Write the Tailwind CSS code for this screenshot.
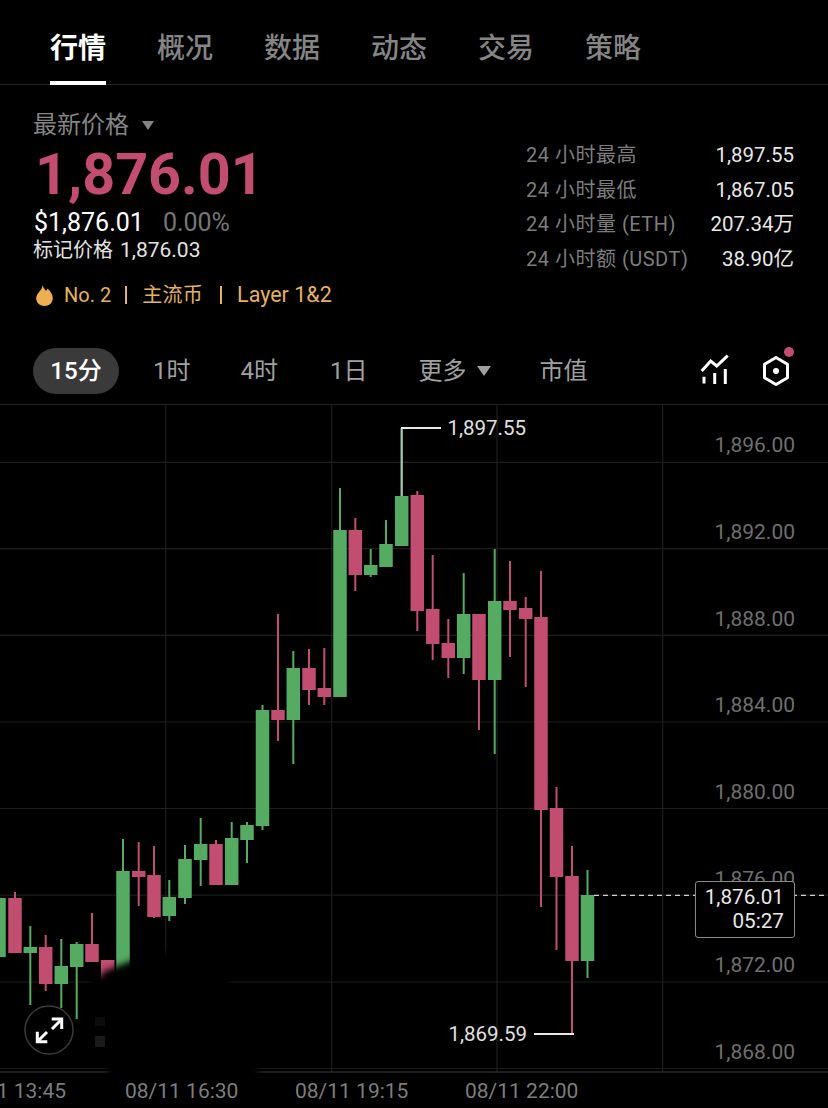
<!DOCTYPE html>
<html lang="zh-CN">
<head>
  <meta charset="UTF-8">
  <title>ETH 行情</title>
  <script src="https://cdn.jsdelivr.net/npm/@tailwindcss/browser@4"></script>
</head>
<body class="bg-black w-[828px] h-[1108px] overflow-hidden font-['Roboto','Noto_Sans_CJK_SC',sans-serif]">

  <!-- Tabs -->
  <nav class="h-[85px] border-b border-[#222] flex gap-[51px] pl-[50px] text-[28px] font-medium text-[#858585]">
    <a class="h-[85px] pt-[29px] leading-[40px] border-b-4 border-white text-white font-bold">行情</a>
    <a class="pt-[29px] leading-[40px]">概况</a>
    <a class="pt-[29px] leading-[40px]">数据</a>
    <a class="pt-[29px] leading-[40px]">动态</a>
    <a class="pt-[29px] leading-[40px]">交易</a>
    <a class="pt-[29px] leading-[40px]">策略</a>
  </nav>

  <!-- Price summary -->
  <section class="h-[263px] flex justify-between pl-[33px] pr-[34px]">
    <div>
      <div class="mt-[24px] h-[32px] flex items-center gap-[13px] text-[24px] leading-[32px] text-[#858585]">
        最新价格
        <span class="w-0 h-0 border-x-[6.5px] border-x-transparent border-t-[9px] border-t-[#858585]"></span>
      </div>
      <div class="mt-[4px] ml-[2px] text-[57.5px] leading-[60px] font-bold text-[#c34d70]">1,876.01</div>
      <div class="mt-[3px] ml-[1px] flex gap-[19px] text-[25px] leading-[30px]">
        <span class="text-white">$1,876.01</span>
        <span class="text-[#767676]">0.00%</span>
      </div>
      <div class="-mt-[2px] text-[20px] leading-[28px] text-[#e4e4e4]">标记价格 <span class="ml-[2px] text-[21px]">1,876.03</span></div>
      <div class="mt-[17px] flex items-center text-[20px] leading-[28px] text-[#e6b163]">
        <svg class="w-[19px] h-[23px] ml-[2px] mr-[10px]" viewBox="0 0 19 23">
          <path fill="#efae52" d="M7.500 1c.8 3 2.500 4.500 3.500 6 .8-.7 1.200-1.500 1.300-2.500C15.500 7 17.800 10.500 17.800 14c0 5-3.800 8-8.300 8S1.200 19 1.200 14.500c0-3 1.500-5 3-6.800C6 5.700 7.500 4 7.500 1z"/>
        </svg>
        <span>No. 2</span>
        <span class="ml-[14px] w-[2px] h-[18px] bg-[#e6b163]"></span>
        <span class="ml-[15px] tracking-[0.3px]">主流币</span>
        <span class="ml-[17px] w-[2px] h-[18px] bg-[#e6b163]"></span>
        <span class="ml-[15px] text-[21.5px]">Layer 1&amp;2</span>
      </div>
    </div>

    <dl class="mt-[53px] w-[268px] grid grid-cols-[1fr_auto] auto-rows-[34.6px] items-center text-[20px]">
      <dt class="text-[#7d7d7d] tracking-[0.5px]">24 小时最高</dt><dd class="text-right text-[20.5px] text-[#e8e8e8]">1,897.55</dd>
      <dt class="text-[#7d7d7d] tracking-[0.5px]">24 小时最低</dt><dd class="text-right text-[20.5px] text-[#e8e8e8]">1,867.05</dd>
      <dt class="text-[#7d7d7d] tracking-[0.5px]">24 小时量 (ETH)</dt><dd class="text-right text-[20.5px] text-[#e8e8e8]">207.34万</dd>
      <dt class="text-[#7d7d7d] tracking-[0.5px]">24 小时额 (USDT)</dt><dd class="text-right text-[20.5px] text-[#e8e8e8]">38.90亿</dd>
    </dl>
  </section>

  <!-- Interval bar -->
  <div class="h-[57px] border-b border-[#222] flex items-start pl-[33px] text-[24px] leading-[46px] text-[#a0a0a0]">
    <span class="w-[86px] h-[46px] rounded-full bg-[#3a3a3a] text-center text-white font-medium">15分</span>
    <span class="ml-[34px]">1时</span>
    <span class="ml-[50px]">4时</span>
    <span class="ml-[52px]">1日</span>
    <span class="ml-[51px]">更多</span>
    <span class="ml-[10px] mt-[18px] w-0 h-0 border-x-[7.500px] border-x-transparent border-t-[10px] border-t-[#a0a0a0]"></span>
    <span class="ml-[49px]">市值</span>
    <svg class="ml-[112px] mt-[6px] w-[30px] h-[32px]" viewBox="0 0 30 32" fill="none" stroke="#fff" stroke-width="3">
      <path d="M1.700 17 10.700 7 16.700 12 27.700 1.700"/>
      <path d="M4 22.700V29.500M14.700 19V30M25.300 15V30"/>
    </svg>
    <div class="relative ml-[31px] mt-[5px] w-[30px] h-[36px]">
      <svg class="w-[30px] h-[36px]" viewBox="0 0 30 36" fill="none" stroke="#fff" stroke-width="3">
        <path d="M15 4.500 26.500 11.250V24.750L15 31.500 3.500 24.750V11.250z" stroke-linejoin="round"/>
        <circle cx="15" cy="18" r="3" fill="#fff" stroke="none"/>
      </svg>
      <span class="absolute -top-[6px] left-[23px] w-[10px] h-[10px] rounded-full bg-[#c34d70]"></span>
    </div>
  </div>

  <!-- Candlestick chart -->
  <div class="relative h-[703px]">
    <svg class="block" width="828" height="703" viewBox="0 405 828 703" font-family="Roboto, sans-serif">
      <g stroke="#1e1e1e" stroke-width="1.200">
        <path d="M0 462.300H828M0 548.700H828M0 635.300H828M0 722H828M0 808.500H828M0 895.200H828M0 982H828"/>
        <path d="M165.700 405V1072M331.700 405V1072M497 405V1072M662.700 405V1072"/>
        <path d="M0 1068.500H828" stroke="#191919"/>
        <path d="M0 1072H828" stroke="#3a3a3a"/>
      </g>
      <g id="candles"></g>
      <path d="M401.700 428V496" stroke="#a9bfac" stroke-width="2"/>
      <!-- smudge over the bottom left of the chart -->
      <g class="blur-[3px]" fill="#000">
        <path d="M102 972 118 966 133 960 172 951V990H102z"/>
        <rect x="90" y="977" width="140" height="50"/>
        <rect x="108" y="1020" width="150" height="60"/>
      </g>
      <rect x="95" y="1017" width="10" height="9" fill="#0c0c0c"/>
      <rect x="95" y="1036" width="10" height="11" fill="#1a1a1a"/>

      <!-- last price line -->
      <path d="M594 895.300H828" stroke="#d0d0d0" stroke-width="1.200" stroke-dasharray="5 4"/>

      <!-- high / low markers -->
      <path d="M401 428H441M534 1034H574" stroke="#e8e8e8" stroke-width="2"/>
      <text x="447.500" y="435" font-size="20.500" fill="#e0e0e0">1,897.55</text>
      <text x="448.500" y="1041" font-size="20.500" fill="#e0e0e0">1,869.59</text>

      <!-- price axis -->
      <g font-size="21" fill="#6f6f6f" text-anchor="end">
        <text x="795" y="452">1,896.00</text>
        <text x="795" y="539">1,892.00</text>
        <text x="795" y="625.500">1,888.00</text>
        <text x="795" y="712">1,884.00</text>
        <text x="795" y="799">1,880.00</text>
        <text x="795" y="885.500">1,876.00</text>
        <text x="795" y="972">1,872.00</text>
        <text x="795" y="1059">1,868.00</text>
      </g>

      <!-- time axis -->
      <g font-size="21" fill="#7d7d7d">
        <text x="66" y="1098" text-anchor="end">1 13:45</text>
        <text x="125" y="1098">08/11 16:30</text>
        <text x="295" y="1098">08/11 19:15</text>
        <text x="465" y="1098">08/11 22:00</text>
      </g>

      <!-- fullscreen button -->
      <circle cx="49" cy="1030" r="24" fill="#000" stroke="#3a3a3a" stroke-width="1.500"/>
      <g fill="none" stroke="#fff" stroke-width="3">
        <path d="M60.500 1020.500 52 1029M38.500 1040.500 47 1032"/>
        <path d="M51.700 1019H61.700V1029"/>
        <path d="M37.300 1031.700V1041.700H47.300"/>
      </g>
    </svg>

    <!-- last price tag -->
    <div class="absolute left-[695px] top-[476px] w-[100px] h-[57px] pr-[10px] pt-[3px] rounded-[3px] border border-[#8a8a8a] bg-black text-right text-[20.7px] leading-[24px] text-[#e8e8e8]">
      <div>1,876.01</div>
      <div>05:27</div>
    </div>
  </div>

  <script>
    const red = '#c14d70';
    const green = '#56ab62';
    // x, wick top, wick bottom, body top, body bottom, colour
    const candles = [
      [-1, 885, 963, 898, 957, green],
      [15, 892, 953, 898, 953, red],
      [30.3, 926, 1005, 947, 953, green],
      [45.7, 935, 991, 947, 984, red],
      [61.3, 939, 1008, 966, 984, green],
      [76.7, 942, 1019, 944, 967, green],
      [92, 913, 962, 944, 962, red],
      [107.7, 960, 985, 960, 985, red],
      [123, 839, 985, 871, 985, green],
      [138.7, 842, 906, 871, 877, red],
      [154, 846, 918, 875, 917, red],
      [169.3, 880, 921, 897, 916, green],
      [185, 845, 904, 859, 898, green],
      [200.7, 818, 886, 844, 860, green],
      [216, 840, 885, 844, 885, red],
      [231.7, 822, 885, 838, 885, green],
      [247, 822, 863, 825, 840, green],
      [262.5, 705, 830, 710, 826, green],
      [278, 614, 741, 710, 720, red],
      [293.3, 651, 764, 668, 720, green],
      [309, 649, 705, 668, 690, red],
      [324.3, 648, 705, 688, 697, red],
      [340, 488, 697, 530, 697, green],
      [355.3, 518, 591, 530, 575, red],
      [370.7, 549, 577, 565, 575, green],
      [386, 520, 567, 544, 567, green],
      [401.7, 428, 546, 496, 546, green],
      [417.3, 491, 631, 495, 611, red],
      [432.7, 555, 660, 609, 644, red],
      [448.3, 619, 678, 643, 658, red],
      [463.7, 573, 674, 614, 658, green],
      [479, 614, 730, 614, 680, red],
      [494.7, 549, 754, 601, 680, green],
      [510, 561, 657, 601, 610, red],
      [525.7, 597, 687, 608, 619, red],
      [541, 571, 907, 617, 810, red],
      [556.5, 787, 950, 808, 877, red],
      [572, 846, 1033, 876, 961, red],
      [587.5, 870, 978, 895, 961, green],
    ];
    document.getElementById('candles').innerHTML = candles.map(([x, wt, wb, bt, bb, c]) =>
      `<rect x="${x - 1}" y="${wt}" width="2" height="${wb - wt}" fill="${c}"/>` +
      `<rect x="${x - 6.75}" y="${bt}" width="13.5" height="${bb - bt}" fill="${c}"/>`
    ).join('');
  </script>
</body>
</html>
